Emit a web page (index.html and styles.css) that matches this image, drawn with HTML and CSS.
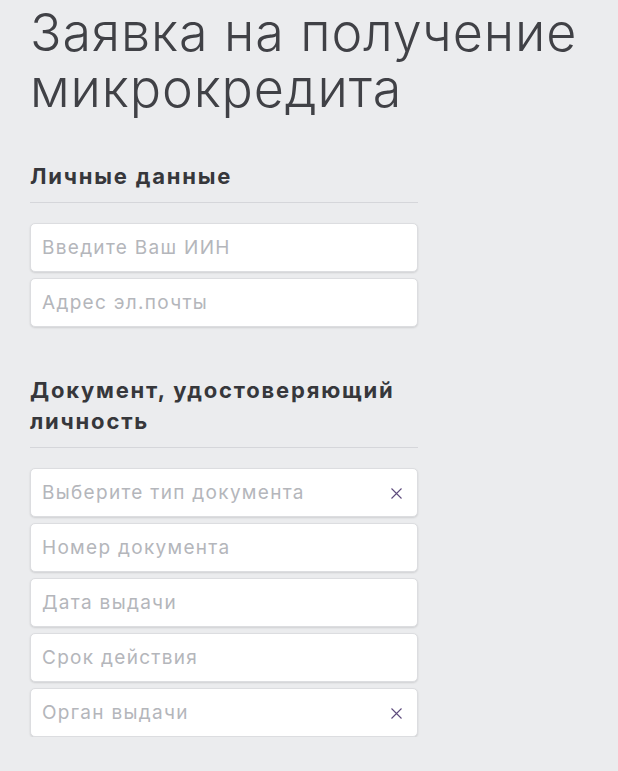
FILE: index.html
```html
<!DOCTYPE html>
<html lang="ru">
<head>
    <meta charset="UTF-8">
    <meta name="viewport" content="width=device-width, initial-scale=1.0">
    <title>Заявка на получение микрокредита</title>
    <link rel="stylesheet" href="styles.css">
</head>
<body>
    <div class="container">
        <h1>Заявка на получение микрокредита</h1>

        <div class="form-section">
            <h2>Личные данные</h2>
            <div class="fields">
                <div class="field"><input type="text" placeholder="Введите Ваш ИИН"></div>
                <div class="field"><input type="text" placeholder="Адрес эл.почты"></div>
            </div>
        </div>

        <div class="form-section">
            <h2>Документ, удостоверяющий личность</h2>
            <div class="fields">
                <div class="field">
                    <input type="text" placeholder="Выберите тип документа">
                    <span class="clear">
                        <svg width="11" height="11" viewBox="0 0 11 11"><path d="M0.5 0.5L10.5 10.5M10.5 0.5L0.5 10.5" stroke="#5e4b7c" stroke-width="1.1" fill="none"/></svg>
                    </span>
                </div>
                <div class="field"><input type="text" placeholder="Номер документа"></div>
                <div class="field"><input type="text" placeholder="Дата выдачи"></div>
                <div class="field"><input type="text" placeholder="Срок действия"></div>
                <div class="field">
                    <input type="text" placeholder="Орган выдачи">
                    <span class="clear">
                        <svg width="11" height="11" viewBox="0 0 11 11"><path d="M0.5 0.5L10.5 10.5M10.5 0.5L0.5 10.5" stroke="#5e4b7c" stroke-width="1.1" fill="none"/></svg>
                    </span>
                </div>
            </div>
        </div>
    </div>
</body>
</html>
```

FILE: styles.css
```css
body {
    margin: 0;
    background-color: #ebecee;
    font-family: Inter, "Open Sans", sans-serif;
    color: #3b3c40;
}

.container {
    padding: 5px 30px 0 30px;
}

h1 {
    font-size: 52px;
    font-weight: 300;
    line-height: 56px;
    margin: 0 0 44px 0;
    color: #404146;
    letter-spacing: 0.9px;
}

.form-section {
    width: 388px;
    margin-bottom: 48px;
}

.form-section:last-child {
    margin-bottom: 0;
}

.form-section h2 {
    font-size: 22px;
    font-weight: 700;
    line-height: 31px;
    margin: 0;
    padding-bottom: 10px;
    border-bottom: 1px solid #d5d6da;
    color: #36373b;
    letter-spacing: 1.8px;
}

.fields {
    display: flex;
    flex-direction: column;
    gap: 6px;
    margin-top: 20px;
}

.field {
    position: relative;
}

input[type="text"] {
    width: 100%;
    height: 49px;
    padding: 0 40px 0 11px;
    border: 1px solid #dcdde0;
    border-radius: 5px;
    background: white;
    box-shadow: 0 1px 2px rgba(0,0,0,0.12);
    font-family: inherit;
    font-size: 19px;
    letter-spacing: 1.3px;
    color: #333;
    box-sizing: border-box;
    outline: none;
}

input::placeholder {
    color: #b4b6bb;
}

.clear {
    position: absolute;
    right: 16px;
    top: 20px;
    width: 11px;
    height: 11px;
    display: flex;
}
```
